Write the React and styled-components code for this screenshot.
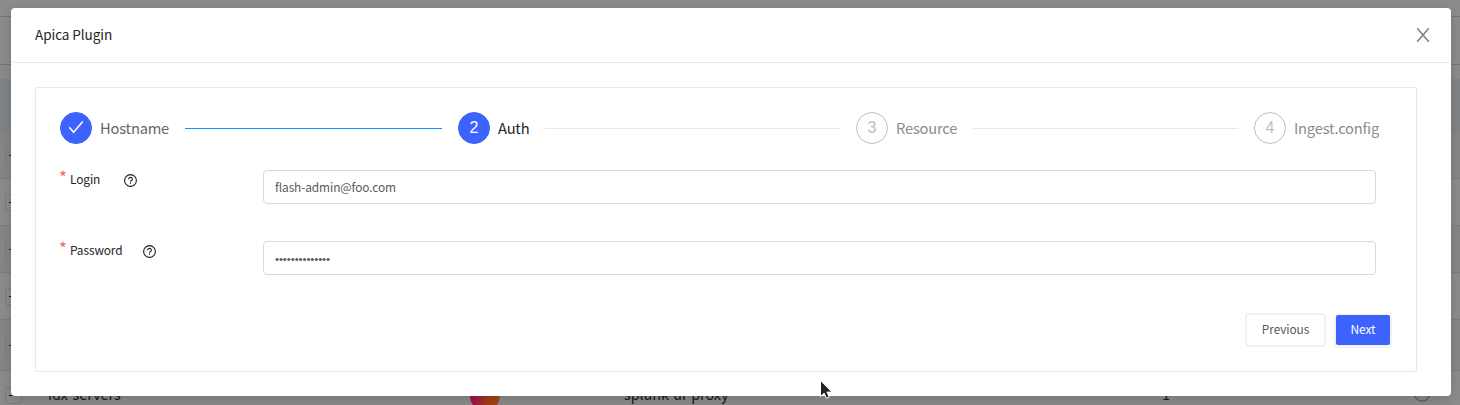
import React from "react";
import styled, { createGlobalStyle } from "styled-components";

const GlobalStyle = createGlobalStyle`
  * { box-sizing: border-box; }
  body { margin: 0; overflow: hidden; font-family: "Noto Sans CJK SC", "Noto Sans", sans-serif; }
`;

const Page = styled.div`
  position: relative;
  height: 405px;
  overflow: hidden;
  background: #8b8b8b;
`;

const TopBar = styled.div`
  height: 17px;
  border-bottom: 1px solid #747474;
`;

const Toolbar = styled.div`
  height: 48px;
  border-bottom: 1px solid #747474;
`;

const TableHead = styled.div`
  height: 53px;
  margin-top: 14px;
  background: #7f8386;
  border-bottom: 1px solid #818181;
`;

const TableRow = styled.div`
  display: grid;
  grid-template-columns: 48px 422px 154px 538px 252px 46px;
  align-items: center;
  height: ${(p) => p.$height}px;
  background: ${(p) => (p.$shaded ? "#868686" : "#8b8b8b")};
  border-bottom: 1px solid #7c7c7c;
`;

const Cell = styled.span`
  padding-bottom: 4px;
  font-size: 14.4px;
  line-height: 20px;
  letter-spacing: -0.05px;
  color: #14181d;
`;

const Expander = styled.span`
  display: grid;
  place-items: center;
  width: 17px;
  height: 17px;
  margin-left: 5px;
  border: 1px solid #7b7b7b;
  border-radius: 2px;

  &::after {
    content: "";
    width: 9px;
    height: 1px;
    background: #161616;
  }
`;

const Logo = styled.span`
  width: 30px;
  height: 30px;
  border-radius: 50%;
  background: linear-gradient(90deg, #9a0759, #a13c18 55%, #9e4a14);
`;

const StatusIcon = styled.svg`
  margin-bottom: 3px;
`;

const Modal = styled.section`
  position: absolute;
  top: 8px;
  left: 11px;
  width: 1440px;
  height: 388px;
  background: #fff;
  border-radius: 4px;
  box-shadow: 0 4px 12px rgba(0, 0, 0, 0.15);
`;

const ModalHeader = styled.header`
  display: flex;
  align-items: center;
  justify-content: space-between;
  height: 55px;
  padding: 0 21px 0 24px;
  border-bottom: 1px solid #e8e8e8;
  border-radius: 4px;
`;

const Title = styled.h1`
  margin: 0;
  padding-bottom: 2px;
  font-size: 13.6px;
  font-weight: 400;
  line-height: 22px;
  letter-spacing: -0.1px;
  color: #262626;
`;

const CloseButton = styled.button`
  display: flex;
  padding: 0;
  border: 0;
  background: none;
  color: #858585;
`;

const Card = styled.div`
  width: 1382px;
  height: 285px;
  margin: 24px;
  padding: 24px;
  border: 1px solid #e8e8e8;
  border-radius: 2px;
`;

const Steps = styled.div`
  display: grid;
  grid-template-columns: repeat(3, 382px) auto;
  gap: 16px;
  height: 32px;
`;

const Step = styled.div`
  display: flex;
  align-items: center;
`;

const StepIcon = styled.span`
  display: grid;
  place-items: center;
  flex: none;
  width: 32px;
  height: 32px;
  margin-right: 8px;
  border: 1px solid ${(p) => (p.$waiting ? "#bfbfbf" : "#3d63ff")};
  border-radius: 50%;
  background: ${(p) => (p.$waiting ? "#fff" : "#3d63ff")};
  color: ${(p) => (p.$waiting ? "#bfbfbf" : "#fff")};
  font: 16px/30px "Liberation Sans", sans-serif;
`;

const StepTitle = styled.span`
  font-size: 14.7px;
  line-height: 32px;
  letter-spacing: -0.2px;
  color: ${(p) => p.$color};
`;

const StepLine = styled.span`
  flex: 1;
  height: 1px;
  margin-left: 16px;
  background: ${(p) => (p.$done ? "#1890ff" : "#e8e8e8")};
`;

const Form = styled.form`
  display: flex;
  flex-direction: column;
  gap: 37px;
  margin-top: 26px;
`;

const Field = styled.div`
  display: grid;
  grid-template-columns: 203px 1113px;
  height: 34px;
`;

const Label = styled.label`
  display: flex;
  align-items: center;
  height: 16px;
  font-size: 11.9px;
  letter-spacing: -0.1px;
  color: #262626;
`;

const Required = styled.span`
  width: 11px;
  height: 22px;
  margin-left: -1px;
  font-size: 17px;
  line-height: 20px;
  color: #f5656c;
`;

const HelpIcon = styled.svg`
  flex: none;
  width: 13px;
  height: 13px;
  margin: 5px 0 0 ${(p) => p.$gap}px;
`;

const Input = styled.input`
  width: 100%;
  height: 34px;
  padding: 0 11px 1px;
  border: 1px solid #d9d9d9;
  border-radius: 4px;
  outline: none;
  background: #fff;
  font-family: "Noto Sans CJK SC", sans-serif;
  font-size: 11.9px;
  letter-spacing: -0.1px;
  color: #595959;

  &[type="password"] {
    padding: 2px 11px 0;
    font-family: "Liberation Sans", sans-serif;
    font-size: 11.5px;
    letter-spacing: -0.1px;
  }
`;

const Actions = styled.div`
  display: flex;
  justify-content: flex-end;
  gap: 12px;
  margin: 40px 2px 0 0;
`;

const Button = styled.button`
  height: 30px;
  width: ${(p) => p.$width}px;
  padding: 0 0 2px;
  border: 0;
  border-radius: 2px;
  background: ${(p) => (p.$primary ? "#3d63ff" : "#fff")};
  color: ${(p) => (p.$primary ? "#fff" : "#595959")};
  box-shadow: ${(p) => (p.$primary ? "0 1px 0 2px #f3f3f5" : "0 0 0 2px #f0f0f5")};
  font-family: "Noto Sans CJK SC", sans-serif;
  font-size: 11.9px;
  letter-spacing: -0.1px;
  line-height: 28px;
`;

const Pointer = styled.svg`
  position: absolute;
  left: 818px;
  top: 378px;
`;

const Help = ({ gap }) => (
  <HelpIcon $gap={gap} viewBox="0 0 13 13" fill="none" stroke="#1f1f1f" strokeWidth="1.1">
    <circle cx="6.5" cy="6.5" r="5.9" />
    <path d="M4.6 5.2c0-2.5 3.8-2.5 3.8 0 0 1.3-1.9 1.3-1.9 2.6M6.5 8.6v1.1" />
  </HelpIcon>
);

const steps = [
  { title: "Hostname", color: "#666", done: true },
  { title: "Auth", color: "#262626" },
  { title: "Resource", color: "#8c8c8c", waiting: true },
  { title: "Ingest.config", color: "#8c8c8c", waiting: true },
];

const rowHeights = [47, 47, 47, 47, 51];

export default function App() {
  return (
    <Page>
      <GlobalStyle />
      <TopBar />
      <Toolbar />
      <TableHead />
      {rowHeights.map((height, i) => (
        <TableRow key={i} $height={height} $shaded={i % 2 === 0}>
          <Expander />
        </TableRow>
      ))}
      <TableRow $height={50}>
        <Expander />
        <Cell>idx-servers</Cell>
        <Logo />
        <Cell>splunk-uf-proxy</Cell>
        <Cell>1</Cell>
        <StatusIcon width="16" height="16" viewBox="0 0 16 16" fill="none" stroke="#3c6d22" strokeWidth="1.2">
          <circle cx="8" cy="8" r="7.2" />
          <path d="M5 7l2 2 4-5" />
        </StatusIcon>
      </TableRow>

      <Modal>
        <ModalHeader>
          <Title>Apica Plugin</Title>
          <CloseButton aria-label="Close">
            <svg width="14" height="14" viewBox="0 0 14 14" fill="none" stroke="currentColor" strokeWidth="1.7">
              <path d="M1.2.3l11.6 13.4M12.8.3L1.2 13.7" />
            </svg>
          </CloseButton>
        </ModalHeader>
        <Card>
          <Steps>
            {steps.map((step, i) => (
              <Step key={step.title}>
                <StepIcon $waiting={step.waiting}>
                  {step.done ? (
                    <svg width="16" height="16" viewBox="0 0 16 16" fill="none" stroke="#fff" strokeWidth="1.5">
                      <path d="M1.3 7.2l4.3 5.1L14.8 1.6" />
                    </svg>
                  ) : (
                    i + 1
                  )}
                </StepIcon>
                <StepTitle $color={step.color}>{step.title}</StepTitle>
                {i < 3 && <StepLine $done={step.done} />}
              </Step>
            ))}
          </Steps>
          <Form>
            <Field>
              <Label>
                <Required>*</Required>Login
                <Help gap={24} />
              </Label>
              <Input defaultValue="flash-admin@foo.com" />
            </Field>
            <Field>
              <Label>
                <Required>*</Required>Password
                <Help gap={20} />
              </Label>
              <Input type="password" defaultValue="abcdefghijklmn" />
            </Field>
          </Form>
          <Actions>
            <Button $width={77}>Previous</Button>
            <Button $width={54} $primary>Next</Button>
          </Actions>
        </Card>
      </Modal>
      <Pointer width="16" height="22" viewBox="0 0 16 22">
        <path d="M2.5 2.5v16l3.7-3.3 2.2 5 2.8-1.2-2.2-4.9h4.9z" fill="#222" stroke="#fff" strokeWidth="1" />
      </Pointer>
    </Page>
  );
}
